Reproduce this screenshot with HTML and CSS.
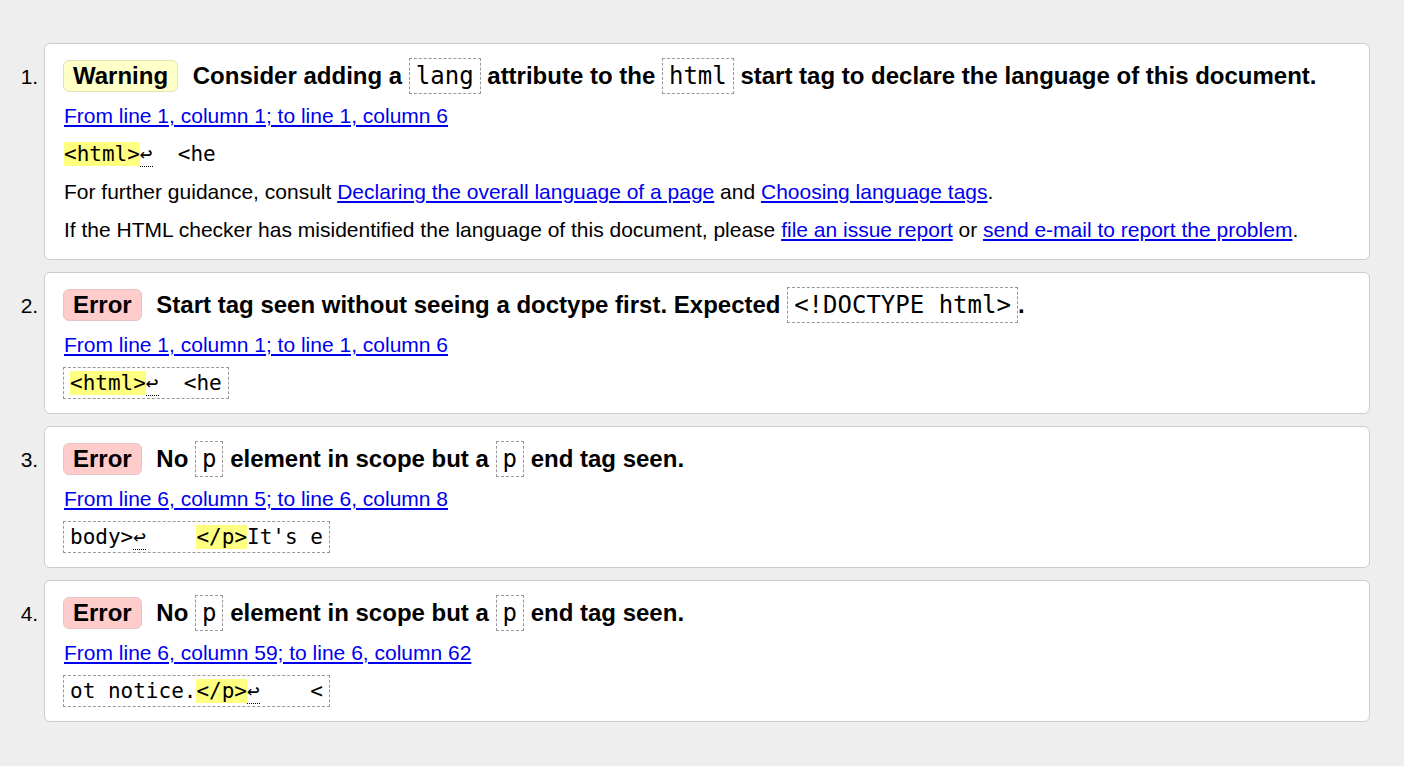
FILE: index.html
```html
<!DOCTYPE html>
<html lang="en">
<head>
<meta charset="utf-8">
<title>Validation results</title>
<link rel="stylesheet" href="styles.css">
</head>
<body>
<ol class="results">
  <li>
    <div class="card">
      <div class="head"><span class="badge warning">Warning</span> <span>Consider adding a <code>lang</code> attribute to the <code>html</code> start tag to declare the language of this document.</span></div>
      <p class="loc"><a href="#">From line 1, column 1; to line 1, column 6</a></p>
      <p class="extract"><code class="ext"><mark>&lt;html&gt;</mark><b class="lf">↩</b>  &lt;he</code></p>
      <p>For further guidance, consult <a href="#">Declaring the overall language of a page</a> and <a href="#">Choosing language tags</a>.</p>
      <p>If the HTML checker has misidentified the language of this document, please <a href="#">file an issue report</a> or <a href="#">send e-mail to report the problem</a>.</p>
    </div>
  </li>
  <li>
    <div class="card">
      <div class="head"><span class="badge error">Error</span> <span>Start tag seen without seeing a doctype first. Expected <code>&lt;!DOCTYPE html&gt;</code>.</span></div>
      <p class="loc"><a href="#">From line 1, column 1; to line 1, column 6</a></p>
      <p class="extract boxed"><code class="ext"><mark>&lt;html&gt;</mark><b class="lf">↩</b>  &lt;he</code></p>
    </div>
  </li>
  <li>
    <div class="card">
      <div class="head"><span class="badge error">Error</span> <span>No <code>p</code> element in scope but a <code>p</code> end tag seen.</span></div>
      <p class="loc"><a href="#">From line 6, column 5; to line 6, column 8</a></p>
      <p class="extract boxed"><code class="ext">body&gt;<b class="lf">↩</b>    <mark>&lt;/p&gt;</mark>It's e</code></p>
    </div>
  </li>
  <li>
    <div class="card">
      <div class="head"><span class="badge error">Error</span> <span>No <code>p</code> element in scope but a <code>p</code> end tag seen.</span></div>
      <p class="loc"><a href="#">From line 6, column 59; to line 6, column 62</a></p>
      <p class="extract boxed"><code class="ext">ot notice.<mark>&lt;/p&gt;</mark><b class="lf">↩</b>    &lt;</code></p>
    </div>
  </li>
</ol>
</body>
</html>
```
FILE: styles.css
```css
html, body {
  margin: 0;
  padding: 0;
  background: #eeeeee;
}
body {
  font-family: "Liberation Sans", Arial, sans-serif;
  font-size: 21px;
  color: #000;
}
.results {
  margin: 43px 34px 0 0;
  padding: 0 0 0 44px;
  list-style: decimal;
}
.results li {
  margin: 0 0 12px 0;
}
.card {
  background: #fff;
  border: 1px solid #cccccc;
  border-radius: 6px;
  padding: 16px 19px 16px 19px;
}
.head {
  font-weight: bold;
  font-size: 24px;
  line-height: 32px;
}
.badge {
  display: inline-block;
  vertical-align: top;
  line-height: 30px;
  padding: 0 9px 0 9px;
  margin-left: -1px;
  border: 1px solid #dddddd;
  border-radius: 6px;
  margin-right: 8px;
}
.badge.warning {
  background: #ffffc8;
  border-color: #e2e2b4;
}
.badge.error {
  background: #ffcccc;
  border-color: #e6c4c4;
}
.head code {
  font-family: "DejaVu Sans Mono", monospace;
  font-weight: normal;
  font-size: 24px;
  line-height: 20px;
  padding: 3px 6px;
  border: 1px dashed #999999;
}
p {
  margin: 11px 0 0 0;
  line-height: 27px;
}
p.loc {
  margin-top: 10px;
}
a {
  color: #0000ee;
  text-decoration: underline;
}
.ext {
  font-family: "DejaVu Sans Mono", monospace;
  font-size: 21px;
  line-height: 20px;
  white-space: pre;
}
.boxed {
  line-height: 28px;
}
.boxed .ext {
  padding: 3px 6px;
  margin-left: -1px;
  border: 1px dashed #999999;
}
mark {
  background: #ffff80;
  color: #000;
}
.lf {
  font-weight: normal;
  border-bottom: 1px dotted #000;
}
```
